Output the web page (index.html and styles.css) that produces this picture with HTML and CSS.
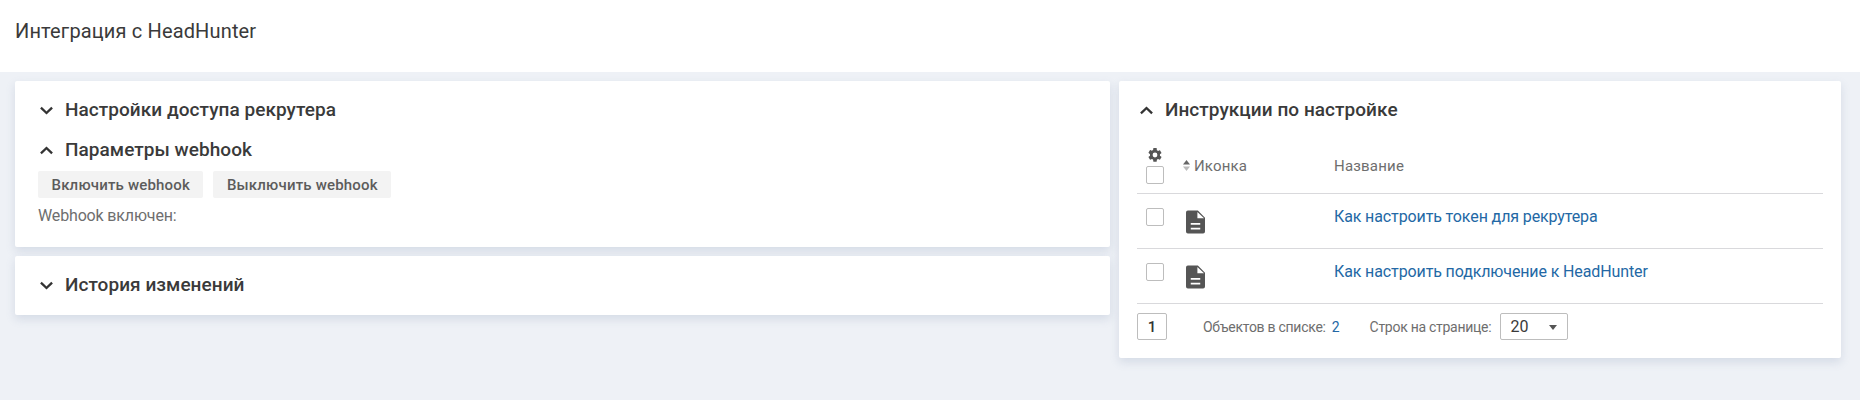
FILE: index.html
```html
<!DOCTYPE html>
<html lang="ru">
<head>
<meta charset="utf-8">
<title>Интеграция с HeadHunter</title>
<link rel="stylesheet" href="styles.css">
</head>
<body>
<svg class="defs" width="0" height="0" aria-hidden="true">
  <symbol id="down" viewBox="0 0 14 9"><path d="M1 1.400 7 7.200l6-5.800" fill="none" stroke="currentColor" stroke-width="2.500"/></symbol>
  <symbol id="up" viewBox="0 0 14 9"><path d="M1 7.600 7 1.800l6 5.800" fill="none" stroke="currentColor" stroke-width="2.500"/></symbol>
  <symbol id="doc" viewBox="0 0 20 24"><path fill-rule="evenodd" d="M2 0h10.500L20 7.500V22a2 2 0 0 1-2 2H2a2 2 0 0 1-2-2V2a2 2 0 0 1 2-2zM5 13v2h10v-2zM5 18v2h10v-2zM12 1.500V8h7z"/></symbol>
</svg>
<header class="top"><h1 class="page-title">Интеграция с HeadHunter</h1></header>
<main class="content">
  <div class="col-left">
    <section class="card card-access">
      <h2 class="sec-head"><svg class="chev"><use href="#down"/></svg>Настройки доступа рекрутера</h2>
      <h2 class="sec-head sec-sub"><svg class="chev"><use href="#up"/></svg>Параметры webhook</h2>
      <div class="btns">
        <button class="btn">Включить webhook</button>
        <button class="btn">Выключить webhook</button>
      </div>
      <div class="status">Webhook включен:</div>
    </section>
    <section class="card card-history">
      <h2 class="sec-head"><svg class="chev"><use href="#down"/></svg>История изменений</h2>
    </section>
  </div>
  <section class="card card-right">
    <h2 class="sec-head"><svg class="chev"><use href="#up"/></svg>Инструкции по настройке</h2>
    <div class="table">
      <div class="row row-head">
        <div class="c-check c-stack">
          <svg class="gear" viewBox="0 0 24 24"><path fill="currentColor" d="M19.400 13c.04-.33.06-.66.06-1s-.02-.67-.06-1l2.100-1.650c.2-.15.25-.42.120-.64l-2-3.460c-.12-.22-.38-.3-.6-.22l-2.500 1c-.52-.4-1.080-.73-1.690-.98l-.38-2.650A.49.49 0 0 0 14 1.500h-4c-.25 0-.46.18-.49.42l-.38 2.650c-.61.25-1.170.59-1.690.98l-2.500-1c-.23-.09-.48 0-.6.220l-2 3.460c-.13.22-.07.49.120.64L4.560 11c-.04.330-.06.670-.06 1s.02.670.06 1l-2.100 1.650c-.19.15-.25.420-.120.640l2 3.460c.12.220.37.300.600.220l2.500-1c.520.400 1.080.730 1.690.980l.38 2.650c.03.240.240.420.490.420h4c.250 0 .460-.180.490-.420l.38-2.650c.610-.250 1.170-.590 1.690-.980l2.500 1c.230.090.480 0 .600-.220l2-3.460c.130-.220.070-.490-.120-.640zM12 15.600a3.600 3.600 0 1 1 0-7.200 3.600 3.600 0 0 1 0 7.200z"/></svg>
          <span class="box"></span>
        </div>
        <div class="c-icon"><svg class="sort" viewBox="0 0 7 11"><path fill="#666" d="M3.500 0 7 4.500H0z"/><path fill="#bbb" d="M3.500 11 0 6.500h7z"/></svg>Иконка</div>
        <div class="c-name">Название</div>
      </div>
      <div class="row">
        <div class="c-check"><span class="box"></span></div>
        <div class="c-icon"><svg class="doc"><use href="#doc"/></svg></div>
        <div class="c-name"><a class="link">Как настроить токен для рекрутера</a></div>
      </div>
      <div class="row">
        <div class="c-check"><span class="box"></span></div>
        <div class="c-icon"><svg class="doc"><use href="#doc"/></svg></div>
        <div class="c-name"><a class="link">Как настроить подключение к HeadHunter</a></div>
      </div>
    </div>
    <div class="pager">
      <span class="page-num">1</span>
      <span class="meta meta-count">Объектов в списке:</span><a class="link count">2</a>
      <span class="meta meta-rows">Строк на странице:</span>
      <span class="select">20<i class="caret"></i></span>
    </div>
  </section>
</main>
</body>
</html>
```
FILE: styles.css
```css
* { box-sizing: border-box; }
html, body { margin: 0; height: 400px; }
body {
  font-family: Roboto, "Noto Sans", sans-serif;
  background: #eef1f6;
  color: #333;
  overflow: hidden;
}
.defs { position: absolute; }
.top { height: 72px; background: #fff; padding: 0 15px; display: flex; align-items: center; }
.page-title { margin: 0 0 10px; font-size: 20px; font-weight: 400; line-height: 24px; letter-spacing: .15px; color: #3a3a3a; }
.content { display: flex; gap: 9px; padding: 9px 19px 0 15px; align-items: flex-start; }
.col-left { width: 1095px; display: flex; flex-direction: column; gap: 9px; }
.card { background: #fff; border-radius: 2px; box-shadow: 0 4px 10px rgba(110, 130, 165, .2); }
.card-access { height: 166px; padding: 17px 24px 0 23px; }
.card-history { height: 59px; padding: 17px 24px 0 23px; }
.card-right { flex: 1; height: 277px; padding: 17px 18px 0 18px; }
.sec-head { margin: 0; height: 24px; display: flex; align-items: center; font-size: 19px; font-weight: 500; line-height: 24px; letter-spacing: .05px; color: #3a3a3a; }
.sec-sub { margin-top: 16px; }
.chev { width: 13px; height: 9px; margin: 0 12px 0 2px; color: #333; flex: none; }
.card-right .chev { margin-left: 3px; }
.btns { display: flex; gap: 10px; margin: 9px 0 0; }
.btn { height: 27px; padding: 0 13.500px; border: 0; border-radius: 2px; background: #f3f3f3; color: #5c5c5c; font: 500 15px Roboto, sans-serif; letter-spacing: .18px; }
.status { margin-top: 9px; font-size: 16px; line-height: 18px; letter-spacing: -.15px; color: #6e6e6e; }
.table { margin-top: 16px; }
.row { display: flex; height: 55px; border-bottom: 1px solid #d9d9dc; }
.row-head { height: 56px; color: #6e6e6e; font-size: 15px; align-items: center; }
.c-check { width: 42px; padding: 14px 0 0 9px; }
.c-stack { padding: 9px 0 0 9px; display: flex; flex-direction: column; align-items: flex-start; height: 100%; }
.c-icon { width: 155px; padding: 16px 0 0 7px; }
.row-head .c-icon { padding: 0 0 0 4px; display: flex; align-items: center; letter-spacing: .15px; }
.c-name { flex: 1; padding-top: 13px; font-size: 16px; line-height: 20px; letter-spacing: -.12px; }
.row-head .c-name { padding: 0; font-size: 15px; letter-spacing: .2px; }
.box { display: block; width: 18px; height: 18px; border: 1px solid #bdbdbd; border-radius: 2px; background: #fff; }
.gear { width: 16px; height: 16px; margin: 0 0 3px 1px; color: #555; }
.sort { width: 7px; height: 11px; margin-right: 4px; }
.doc { width: 19px; height: 24px; fill: #555; display: block; }
.link { color: #2368a5; }
.pager { display: flex; align-items: center; height: 27px; margin-top: 9px; font-size: 14px; }
.page-num { width: 30px; height: 27px; border: 1px solid #bdbdbd; border-radius: 2px; display: flex; align-items: center; justify-content: center; font-size: 15px; font-weight: 500; color: #333; }
.meta { color: #6e6e6e; letter-spacing: -.27px; }
.meta-count { margin-left: 36px; margin-right: 6px; }
.count { font-size: 14px; }
.meta-rows { margin-left: 30px; margin-right: 9px; }
.select { position: relative; width: 68px; height: 27px; border: 1px solid #bdbdbd; border-radius: 2px; padding-left: 9px; display: flex; align-items: center; font-size: 16px; color: #3a3a3a; }
.caret { position: absolute; right: 10px; top: 11px; border: 4px solid transparent; border-top: 5px solid #555; border-bottom: 0; }
```
